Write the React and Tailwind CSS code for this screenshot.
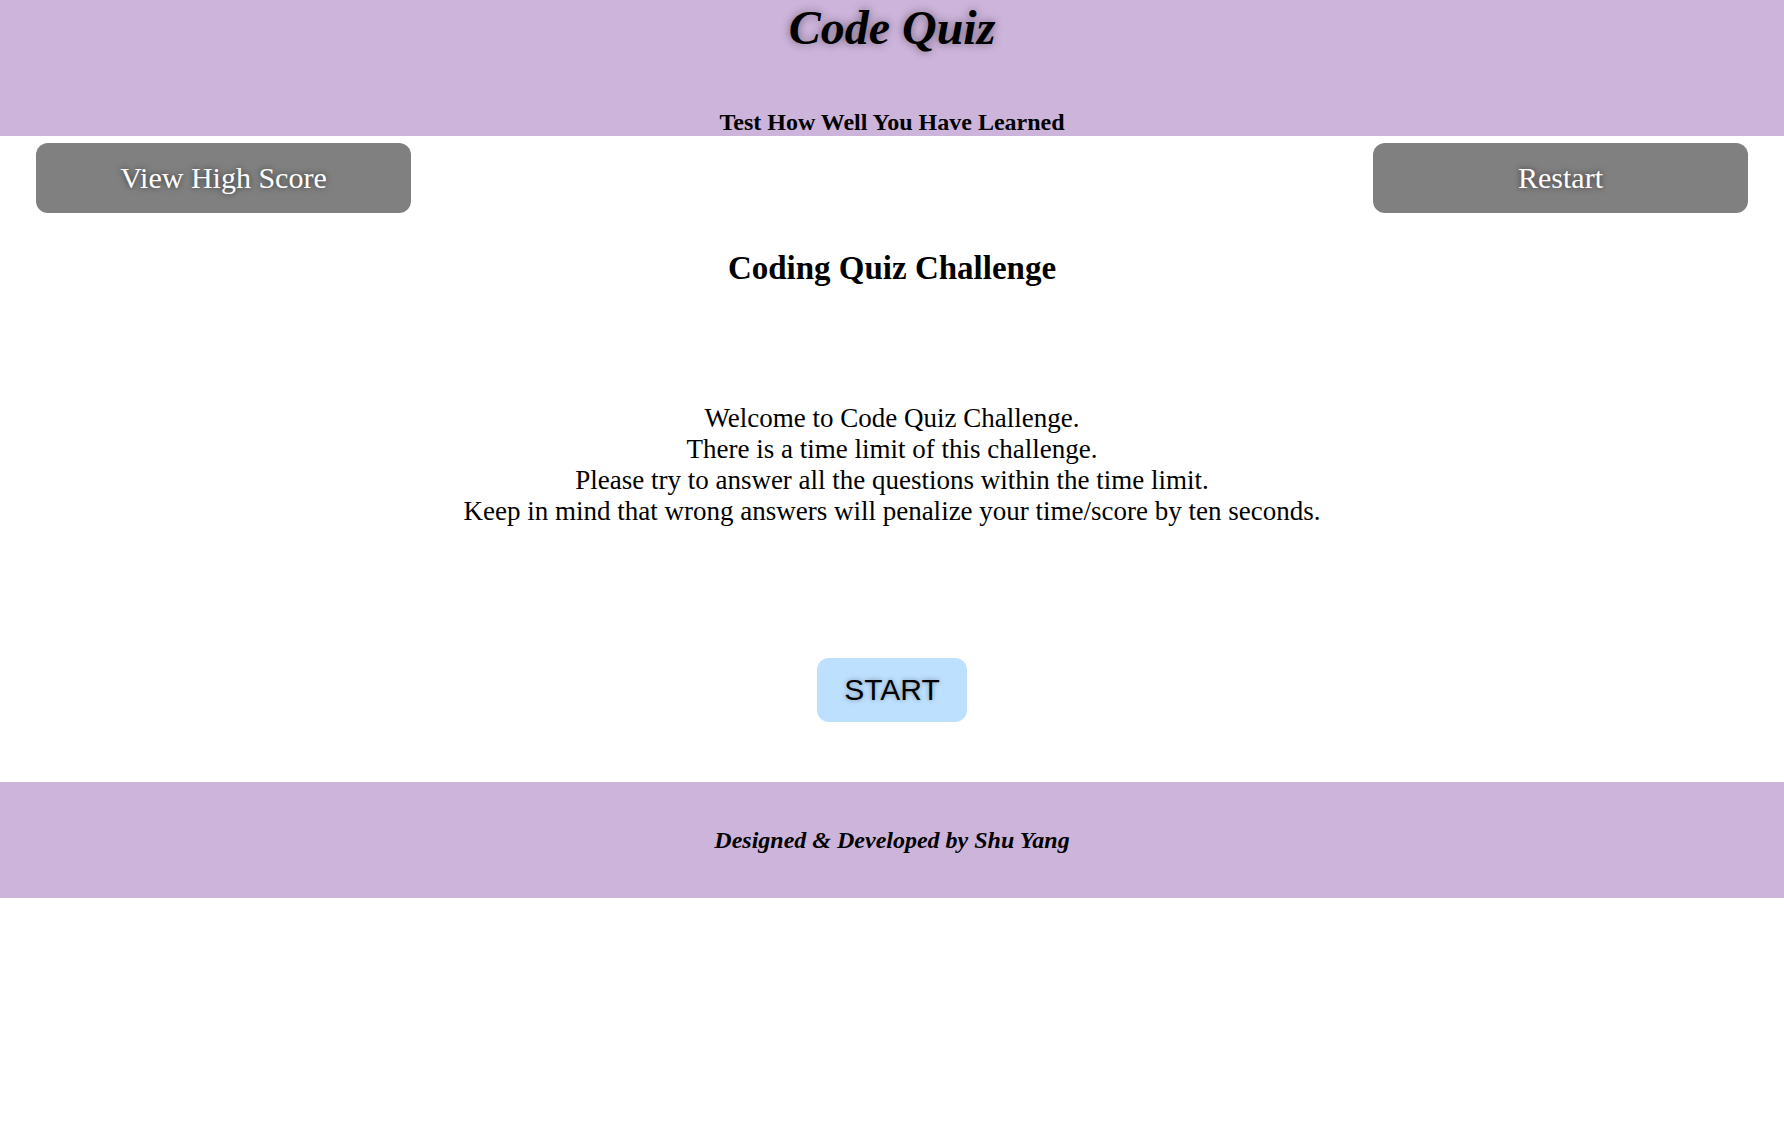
import React from 'react';

const lines = [
  'Welcome to Code Quiz Challenge.',
  'There is a time limit of this challenge.',
  'Please try to answer all the questions within the time limit.',
  'Keep in mind that wrong answers will penalize your time/score by ten seconds.',
];

const App = () => {
  return (
    <div className="min-h-screen bg-white text-black font-['Liberation_Serif','Times_New_Roman',serif]">
      {/* Header */}
      <header className="h-[136px] bg-[#cdb4db] flex flex-col items-center">
        <h1 className="text-[48px] leading-[55px] font-bold italic [text-shadow:0_0_10px_rgba(0,0,0,0.45)]">
          Code Quiz
        </h1>
        <h3 className="mt-[54px] text-[24px] leading-[27px] font-bold">
          Test How Well You Have Learned
        </h3>
      </header>

      {/* Top buttons */}
      <div className="flex justify-between px-[36px] mt-[7px]">
        <button className="w-[375px] h-[70px] rounded-[12px] bg-[#808080] text-white text-[30px] leading-[34px] [text-shadow:0_0_6px_rgba(0,0,0,0.6)]">
          View High Score
        </button>
        <button className="w-[375px] h-[70px] rounded-[12px] bg-[#808080] text-white text-[30px] leading-[34px] [text-shadow:0_0_6px_rgba(0,0,0,0.6)]">
          Restart
        </button>
      </div>

      {/* Intro */}
      <main className="flex flex-col items-center">
        <h2 className="mt-[36px] text-[33px] leading-[38px] font-bold">Coding Quiz Challenge</h2>
        <p className="mt-[116px] text-[27px] leading-[31px] text-center">
          {lines.map((line) => (
            <span key={line} className="block">
              {line}
            </span>
          ))}
        </p>
        <button className="mt-[131px] w-[150px] h-[64px] rounded-[12px] bg-[#bde0fe] text-[30px] leading-[34px] font-['Liberation_Sans',Arial,sans-serif] [text-shadow:0_0_5px_rgba(0,0,0,0.35)]">
          START
        </button>
      </main>

      {/* Footer */}
      <footer className="mt-[60px] bg-[#cdb4db] py-[44px] text-center">
        <p className="text-[24px] leading-[28px] font-bold italic">Designed &amp; Developed by Shu Yang</p>
      </footer>
    </div>
  );
};

export default App;
